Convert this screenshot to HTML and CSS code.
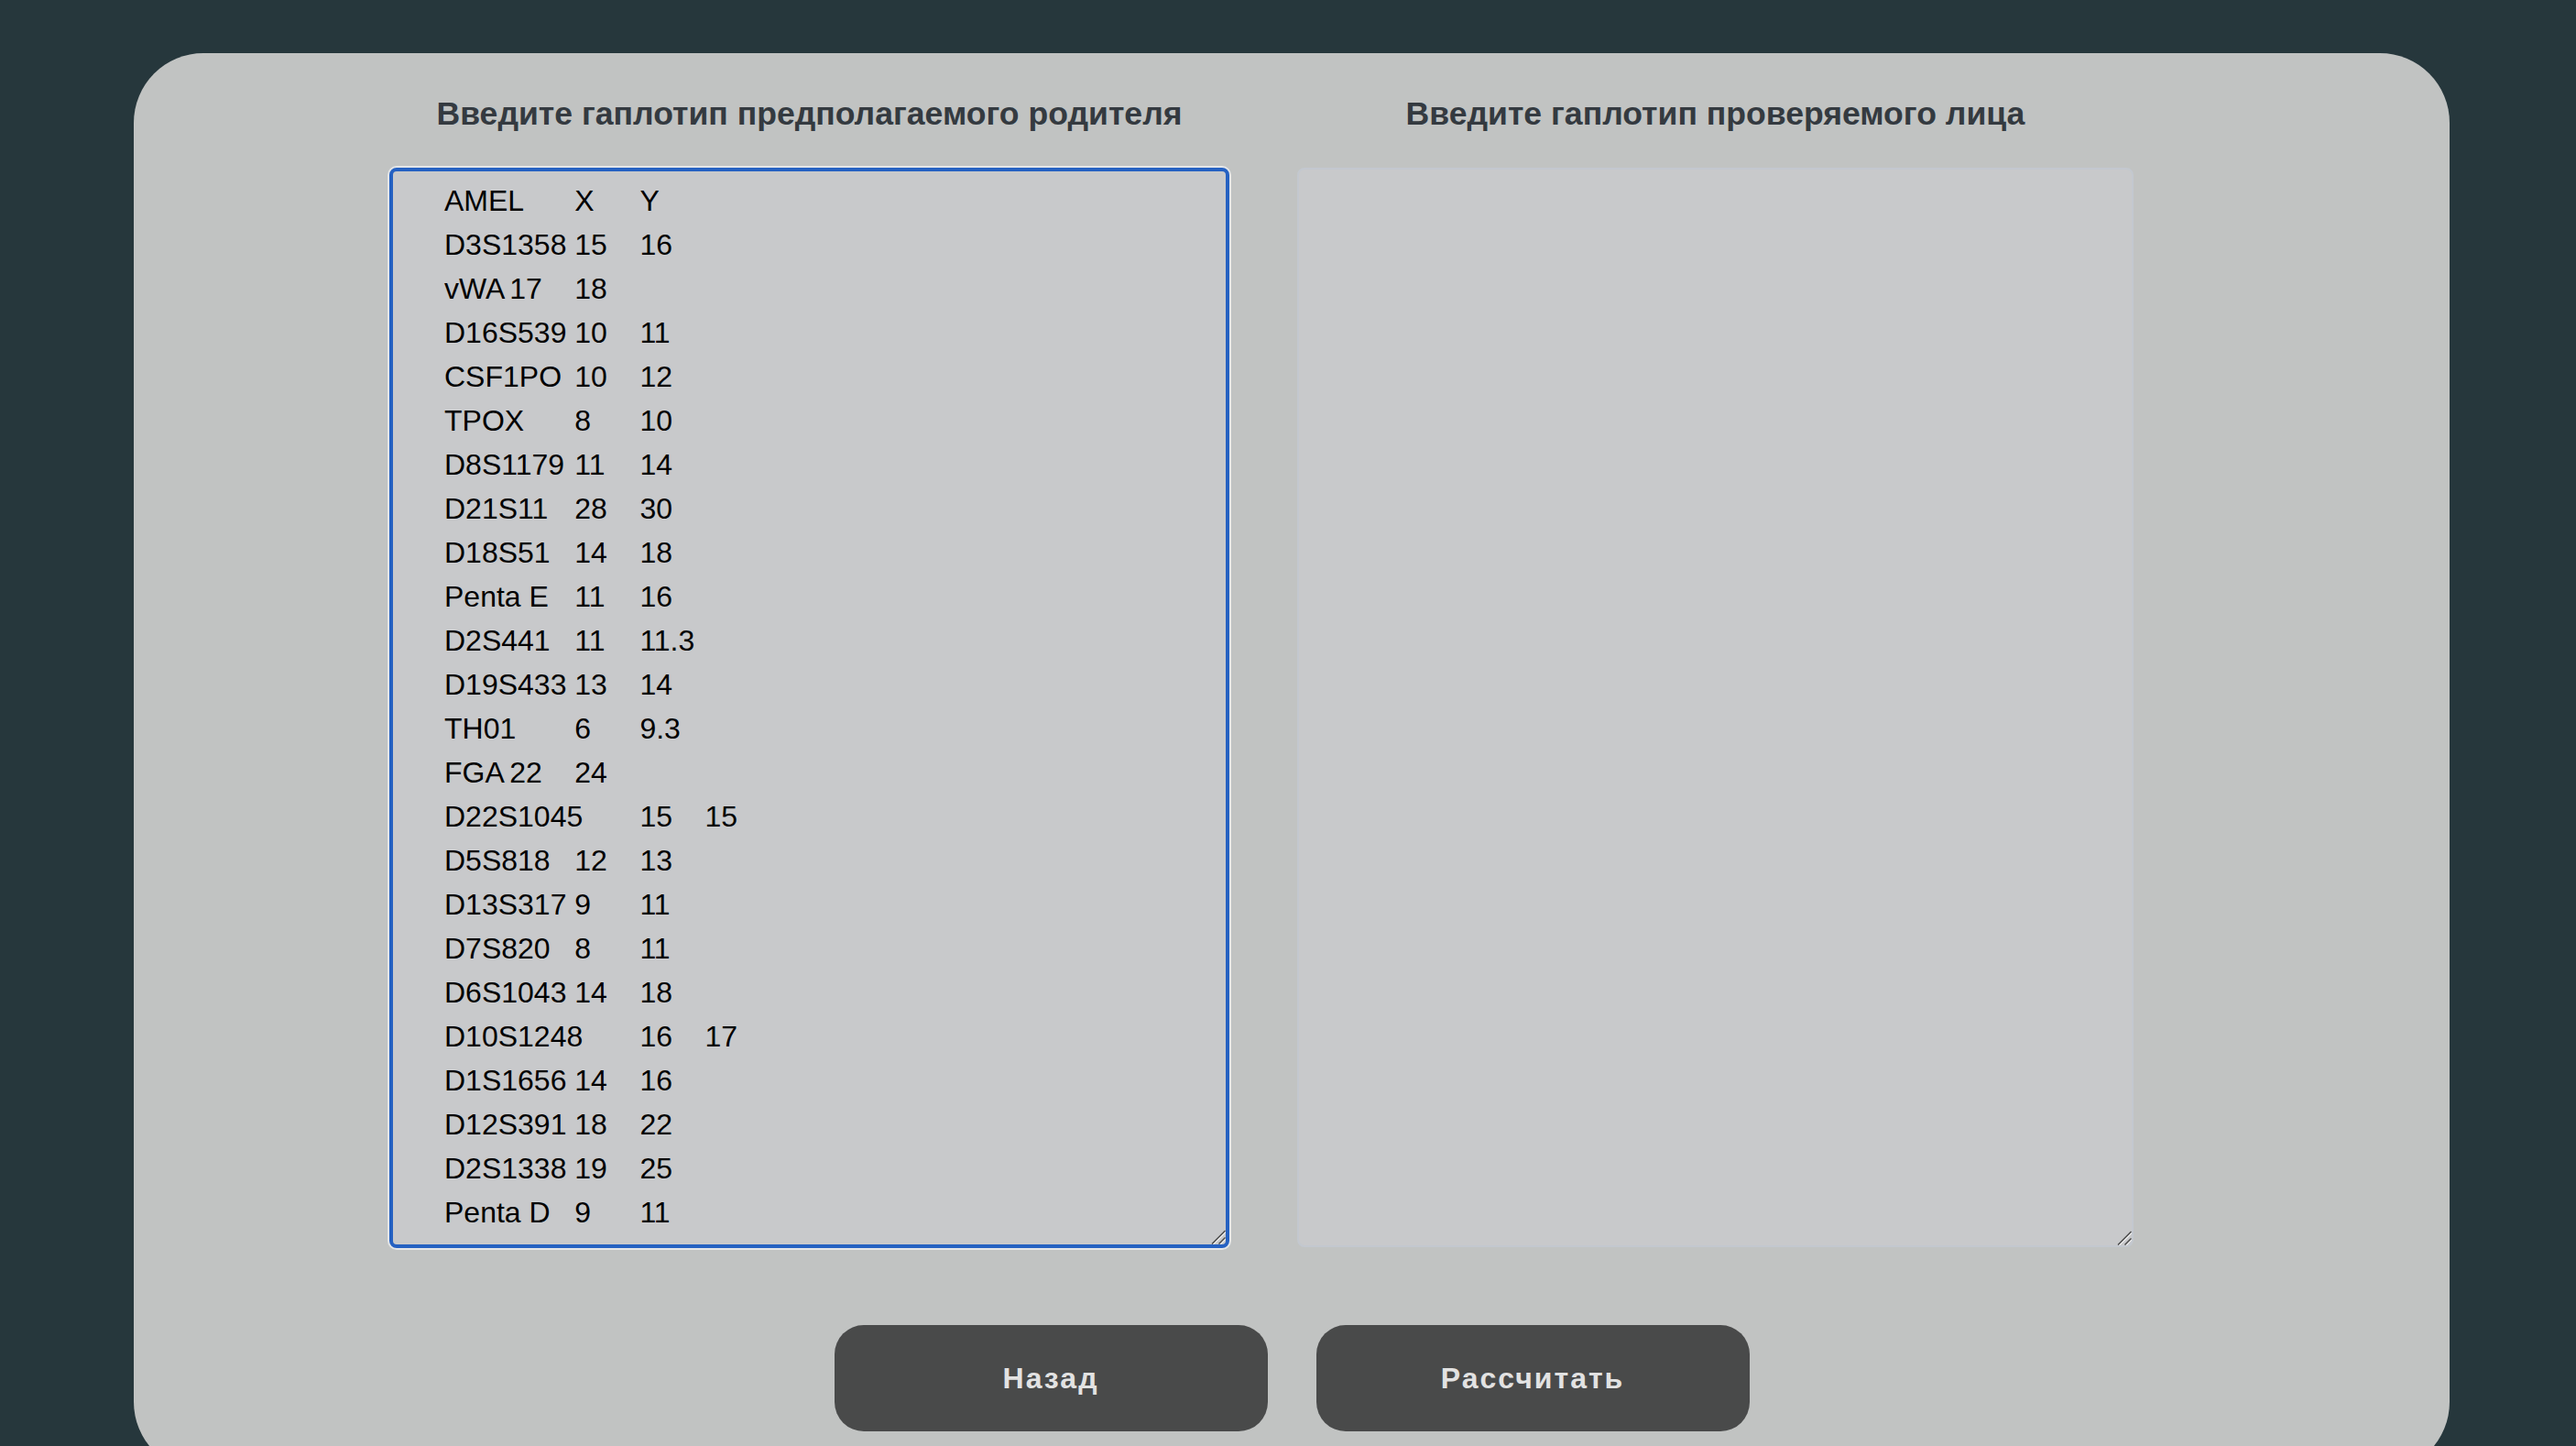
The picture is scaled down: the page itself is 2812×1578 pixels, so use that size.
FILE: index.html
```html
<!DOCTYPE html>
<html lang="ru">
<head>
<meta charset="utf-8">
<title>Гаплотип</title>
<link rel="stylesheet" href="styles.css">
</head>
<body>
<main class="card">
  <div class="columns">
    <section class="column column-left">
      <h3 class="column-title">Введите гаплотип предполагаемого родителя</h3>
      <div class="field field-focused">
        <textarea class="haplo haplo-focused" spellcheck="false">AMEL&#9;X&#9;Y
D3S1358&#9;15&#9;16
vWA&#9;17&#9;18
D16S539&#9;10&#9;11
CSF1PO&#9;10&#9;12
TPOX&#9;8&#9;10
D8S1179&#9;11&#9;14
D21S11&#9;28&#9;30
D18S51&#9;14&#9;18
Penta E&#9;11&#9;16
D2S441&#9;11&#9;11.3
D19S433&#9;13&#9;14
TH01&#9;6&#9;9.3
FGA&#9;22&#9;24
D22S1045&#9;15&#9;15
D5S818&#9;12&#9;13
D13S317&#9;9&#9;11
D7S820&#9;8&#9;11
D6S1043&#9;14&#9;18
D10S1248&#9;16&#9;17
D1S1656&#9;14&#9;16
D12S391&#9;18&#9;22
D2S1338&#9;19&#9;25
Penta D&#9;9&#9;11</textarea>
        <svg class="grip" width="16" height="16" viewBox="0 0 16 16" aria-hidden="true">
          <path d="M1 15.5 L15.5 1 M8.5 15.5 L15.5 8.5" stroke="#f2f2f2" stroke-width="1.5" fill="none" transform="translate(1.2 0.6)"/>
          <path d="M1 15.5 L15.5 1 M8.5 15.5 L15.5 8.5" stroke="#4a4a4a" stroke-width="1.5" fill="none"/>
        </svg>
      </div>
    </section>
    <section class="column column-right">
      <h3 class="column-title">Введите гаплотип проверяемого лица</h3>
      <div class="field field-plain">
        <textarea class="haplo" spellcheck="false"></textarea>
        <svg class="grip" width="16" height="16" viewBox="0 0 16 16" aria-hidden="true">
          <path d="M1 15.5 L15.5 1 M8.5 15.5 L15.5 8.5" stroke="#f2f2f2" stroke-width="1.5" fill="none" transform="translate(1.2 0.6)"/>
          <path d="M1 15.5 L15.5 1 M8.5 15.5 L15.5 8.5" stroke="#4a4a4a" stroke-width="1.5" fill="none"/>
        </svg>
      </div>
    </section>
  </div>
  <div class="actions">
    <button class="btn" type="button">Назад</button>
    <button class="btn" type="button">Рассчитать</button>
  </div>
</main>
</body>
</html>
```
FILE: styles.css
```css
html {
  overflow: hidden;
}

body {
  margin: 0;
  background: #26373c;
  font-family: "Liberation Sans", Arial, sans-serif;
}

.card {
  box-sizing: border-box;
  width: 2528px;
  height: 1548px;
  margin: 58px 0 0 146px;
  background: #c1c3c2;
  border-radius: 76px;
  padding-top: 45px;
}

.columns {
  display: flex;
  gap: 74px;
  padding-left: 279px;
}

.column {
  display: flex;
  flex-direction: column;
  align-items: center;
}

.column-left {
  width: 917px;
}

.column-right {
  width: 913px;
}

.column-title {
  margin: 0 0 38px;
  font-size: 35.6px;
  line-height: 42px;
  font-weight: bold;
  color: #343a40;
  white-space: nowrap;
}

.field {
  position: relative;
  width: 100%;
  display: flex;
}

.grip {
  position: absolute;
  pointer-events: none;
}

.field-focused .grip {
  right: 4px;
  bottom: 4px;
}

.field-plain .grip {
  right: 2px;
  bottom: 2px;
}

.haplo {
  box-sizing: border-box;
  width: 100%;
  height: 1178px;
  margin: 0;
  padding: 8px 54px;
  background: #c8c9cb;
  border: 2px solid #c3c8cf;
  border-radius: 8px;
  font-family: "Liberation Sans", Arial, sans-serif;
  font-size: 32px;
  line-height: 48px;
  color: #000;
  tab-size: 8;
  white-space: pre;
  overflow: hidden;
  resize: none;
  outline: none;
}

.haplo-focused {
  height: 1179px;
  padding: 8px 56px;
  border: 4px solid #2561c2;
  box-shadow: 0 0 0 2px #e4e6e8;
}

.actions {
  display: flex;
  justify-content: center;
  gap: 53px;
  margin-top: 84px;
}

.btn {
  width: 473px;
  height: 116px;
  border: none;
  border-radius: 32px;
  background: #494a4a;
  color: #e2e2e2;
  font-family: "Liberation Sans", Arial, sans-serif;
  font-size: 32px;
  font-weight: bold;
  letter-spacing: 2px;
  cursor: pointer;
}
```
